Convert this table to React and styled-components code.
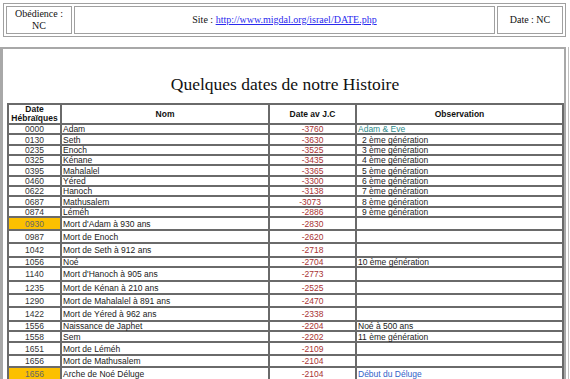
import React from "react"
import styled, { createGlobalStyle } from "styled-components"

const GlobalStyle = createGlobalStyle`
  body {
    margin: 0;
    background: #fff;
    font-family: "Liberation Serif", "Times New Roman", serif;
  }
`

const Page = styled.div`
  width: 570px;
  height: 379px;
  overflow: hidden;
`

const TopTable = styled.table`
  margin: 3px 0 0 3px;
  width: 563px;
  border: 1px solid #a0a0a0;
  border-spacing: 2px;
  table-layout: fixed;
`

const TopCell = styled.td`
  border: 1px solid #a0a0a0;
  padding: 1px 2px;
  text-align: center;
  font-size: 10px;
  line-height: 12px;
  height: 24px;
  color: #111;
  a {
    color: #2a2aee;
  }
`

const Box = styled.div`
  margin: 10px 4px 0 0;
  border: 2px solid #a8a8a8;
  border-left-width: 3px;
  border-bottom: none;
  padding: 0 1px 0 4px;
  box-shadow: 2px 0 0 0 #fff, 3px 0 0 0 #c0c0c0;
`

const Title = styled.h1`
  margin: 0;
  padding: 25px 0 9px;
  font-weight: normal;
  font-size: 17.5px;
  line-height: 20px;
  text-align: center;
  color: #111;
`

const Dates = styled.table`
  width: 555px;
  border-collapse: collapse;
  table-layout: fixed;
  font-family: "Liberation Sans", Arial, sans-serif;
  font-size: 8.5px;
  line-height: 8px;
`

const Head = styled.th`
  border: 2px solid #6a6a6a;
  height: 16px;
  padding: 0;
  font-weight: bold;
  line-height: 9px;
  color: #111;
  text-align: center;
  vertical-align: middle;
`

const Row = styled.tr`
  height: ${p => p.$h}px;
`

const Cell = styled.td`
  border: 2px solid #6a6a6a;
  padding: 0 1px;
  vertical-align: middle;
  white-space: nowrap;
  text-align: ${p => p.$align || "left"};
  color: ${p => p.$color || "#1a1a1a"};
  background: ${p => (p.$mark ? "#fcc000" : "transparent")};
`

// [hébraïque, nom, date av J.C, observation, row height, options]
const rows = [
  ["0000", "Adam", "-3760", "Adam & Eve", 10.35, { obsColor: "#2b8a8a" }],
  ["0130", "Seth", "-3630", "2 ème génération", 10.35, { indent: 5 }],
  ["0235", "Enoch", "-3525", "3 ème génération", 10.35, { indent: 5 }],
  ["0325", "Kénane", "-3435", "4 ème génération", 10.35, { indent: 5 }],
  ["0395", "Mahalalel", "-3365", "5 ème génération", 10.35, { indent: 5 }],
  ["0460", "Yéred", "-3300", "6 ème génération", 10.35, { indent: 5 }],
  ["0622", "Hanoch", "-3138", "7 ème génération", 10.35, { indent: 5 }],
  ["0687", "Mathusalem", "-3073", "8 ème génération", 10.35, { indent: 5, shift: 6 }],
  ["0874", "Léméh", "-2886", "9 ème génération", 10.35, { indent: 5 }],
  ["0930", "Mort d'Adam à 930 ans", "-2830", "", 13, { mark: true }],
  ["0987", "Mort de Enoch", "-2620", "", 13, {}],
  ["1042", "Mort de Seth à 912 ans", "-2718", "", 14, {}],
  ["1056", "Noé", "-2704", "10 ème génération", 10, {}],
  ["1140", "Mort d'Hanoch à 905 ans", "-2773", "", 14, {}],
  ["1235", "Mort de Kénan à 210 ans", "-2525", "", 13, {}],
  ["1290", "Mort de Mahalalel à 891 ans", "-2470", "", 13, {}],
  ["1422", "Mort de Yéred à 962 ans", "-2338", "", 14, {}],
  ["1556", "Naissance de Japhet", "-2204", "Noé à 500 ans", 10, {}],
  ["1558", "Sem", "-2202", "11 ème génération", 11, {}],
  ["1651", "Mort de Léméh", "-2109", "", 13, {}],
  ["1656", "Mort de Mathusalem", "-2104", "", 12, {}],
  ["1656", "Arche de Noé Déluge", "-2104", "Début du Déluge", 13, { mark: true, obsColor: "#3262c8" }],
]

const App = () => {
  return (
    <Page>
      <GlobalStyle />
      <TopTable>
        <colgroup>
          <col style={{ width: 66 }} />
          <col />
          <col style={{ width: 66 }} />
        </colgroup>
        <tbody>
          <tr>
            <TopCell>
              Obédience :
              <br />
              NC
            </TopCell>
            <TopCell>
              Site : <a href="#">http://www.migdal.org/israel/DATE.php</a>
            </TopCell>
            <TopCell>Date : NC</TopCell>
          </tr>
        </tbody>
      </TopTable>

      <Box>
        <Title>Quelques dates de notre Histoire</Title>
        <Dates>
          <colgroup>
            <col style={{ width: 53 }} />
            <col style={{ width: 208 }} />
            <col style={{ width: 87 }} />
            <col style={{ width: 207 }} />
          </colgroup>
          <thead>
            <tr>
              <Head>
                Date
                <br />
                Hébraïques
              </Head>
              <Head>Nom</Head>
              <Head>Date av J.C</Head>
              <Head>Observation</Head>
            </tr>
          </thead>
          <tbody>
            {rows.map(([heb, name, date, obs, h, opt], i) => (
              <Row key={i} $h={h}>
                <Cell $mark={opt.mark} $align="center" $color={opt.mark ? "#666" : "#333"}>
                  {heb}
                </Cell>
                <Cell>{name}</Cell>
                <Cell
                  $align="center"
                  $color="#a83232"
                  style={opt.shift ? { paddingRight: opt.shift } : undefined}
                >
                  {date}
                </Cell>
                <Cell
                  $color={opt.obsColor}
                  style={opt.indent ? { paddingLeft: opt.indent } : undefined}
                >
                  {obs}
                </Cell>
              </Row>
            ))}
          </tbody>
        </Dates>
      </Box>
    </Page>
  )
}

export default App
